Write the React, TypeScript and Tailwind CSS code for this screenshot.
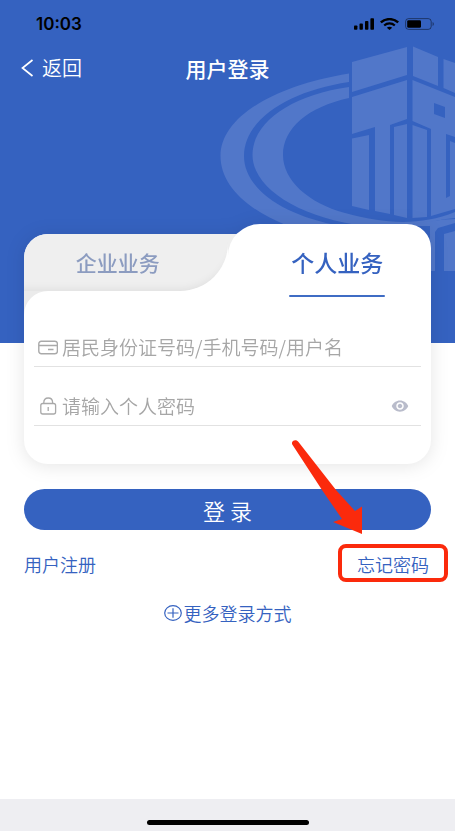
import { useState } from 'react';
import { MdVisibility } from 'react-icons/md';

function SignalIcon() {
  return (
    <svg className="w-5 h-3" viewBox="0 0 20 12" fill="currentColor" aria-hidden="true">
      <rect x="0" y="7.5" width="3.4" height="4.2" rx="0.8" />
      <rect x="5.5" y="5.6" width="3.4" height="6.1" rx="0.8" />
      <rect x="11" y="3" width="3.4" height="8.7" rx="0.8" />
      <rect x="16.4" y="0.3" width="3.6" height="11.4" rx="0.8" />
    </svg>
  );
}

function WifiIcon() {
  return (
    <svg className="w-[19px] h-3" viewBox="0 0 19 12" fill="none" stroke="currentColor" aria-hidden="true">
      <path d="M0.8 4.4C5.6 0 13.4 0 18.2 4.4" strokeWidth="2.4" />
      <path d="M4.2 7.5C7.2 4.7 11.8 4.7 14.8 7.5" strokeWidth="2.2" />
      <path d="M9.5 12 6.8 9.7C8.3 8.4 10.7 8.4 12.2 9.7Z" fill="currentColor" stroke="none" />
    </svg>
  );
}

function BatteryIcon() {
  return (
    <svg className="w-[30px] h-3" viewBox="0 0 30 12" aria-hidden="true">
      <rect x="0.6" y="0.6" width="25.6" height="10.8" rx="3" fill="none" stroke="#000" strokeOpacity="0.45" />
      <rect x="2.2" y="2.2" width="13.8" height="7.6" rx="1.4" fill="#000" />
      <path d="M27.6 4v4c1.6-.7 1.6-3.3 0-4Z" fill="#000" fillOpacity="0.5" />
    </svg>
  );
}

function Emblem() {
  return (
    <svg
      className="absolute right-0 top-10 w-[240px] h-[231px]"
      viewBox="215 40 240 231"
      fill="#5177c9"
      aria-hidden="true"
    >
      {/* rings */}
      <path d="M349 73.500C272 86 220.500 118 220.500 156C220.500 184 245 209 288 226H341C282 216 244 188 244 156C244 120 288 91 349 82Z" />
      <path d="M349 87C292 95 252.500 122 252.500 155C252.500 188 300 218 365 226H420C432 221 443 219 455 218V212C420 226 385 224 345 213C308 203 283 180 283 155C283 128 308 107 349 98Z" />
      <path d="M341 226C390 232 420 220 455 219V223L438 228L435 232V271H430V226Z" />
      <path d="M444 234 455 231V271H444Z" />
      {/* roof */}
      <path d="M352 62 407 47V75L352 92Z" />
      <path d="M413 46.500 438 57V86L413 76Z" />
      <path d="M443.500 59 455 63V93L443.500 88Z" />
      {/* columns */}
      <path d="M352 97 407 80V119L390 125V214L375 211V127L352 134Z" />
      <path d="M352 138.500 369 135V210L352 206Z" />
      <path d="M394 127 407 124V218L394 215Z" />
      <path d="M412.500 125 427 130V217L412.500 218Z" />
      <path
        fillRule="evenodd"
        d="M412.500 80 455 97V137L446 134V198L450 196V141L455 143V209L431 216V129L412.500 121ZM434 103V114L445 118V107Z"
      />
    </svg>
  );
}

function CardIcon() {
  return (
    <svg className="w-5 h-4 shrink-0" viewBox="0 0 20 16" fill="none" stroke="#a9a9a9" strokeWidth="1.4" aria-hidden="true">
      <rect x="0.8" y="1.200" width="18.6" height="12.600" rx="2.500" />
      <path d="M1 5.500H19M10 9.500H15.500" />
    </svg>
  );
}

function LockIcon() {
  return (
    <svg className="w-5 h-[18px] shrink-0" viewBox="0 0 20 18" fill="none" stroke="#a9a9a9" strokeWidth="1.3" aria-hidden="true">
      <rect x="2.800" y="6.500" width="14.800" height="10.500" rx="2" />
      <path d="M5.800 6.500V5.500C5.800 2.600 7.200 1 10.200 1S14.600 2.600 14.600 5.500V6.500M10.200 10V14" />
    </svg>
  );
}

export default function App() {
  const [showPassword, setShowPassword] = useState(false);

  return (
    <div className="min-h-screen flex flex-col bg-white font-['Noto_Sans_CJK_SC',sans-serif] text-[#3562c0]">
      <header className="relative h-[343px] bg-[#3562c0] overflow-hidden">
        <Emblem />
        <div className="relative flex items-center justify-between pt-3 pl-9 pr-5 text-black">
          <span className="font-['Inter',sans-serif] text-[17px] leading-6 font-semibold">10:03</span>
          <div className="flex items-center gap-1.5">
            <SignalIcon />
            <WifiIcon />
            <BatteryIcon />
          </div>
        </div>
        <nav className="relative grid grid-cols-[1fr_auto_1fr] items-center mt-4 px-5 text-white">
          <button type="button" className="flex items-center gap-2 text-xl leading-8 font-[350]">
            <svg className="w-3.5 h-[18px]" viewBox="0 0 14 18" fill="none" stroke="currentColor" strokeWidth="1.7" aria-hidden="true">
              <path d="M12.500 1 2.500 9 12.500 17" />
            </svg>
            返回
          </button>
          <h1 className="text-[21px] leading-8 font-medium">用户登录</h1>
        </nav>
      </header>

      <main className="relative -mt-[119px] px-6">
        <form onSubmit={(e) => e.preventDefault()}>
          <div className="drop-shadow-[0_2px_9px_rgba(0,0,0,0.10)]">
            <div role="tablist" className="grid grid-cols-2 items-end">
              <div className="bg-white rounded-tl-[24px]">
                <button
                  type="button"
                  role="tab"
                  aria-selected="false"
                  className="w-full h-[57px] pr-4 bg-[#efefef] rounded-tl-[24px] rounded-br-[48px] text-[21px] font-medium text-[#8c9cc0] shadow-[inset_0_-9px_10px_-8px_rgba(0,0,0,0.08)]"
                >
                  企业业务
                </button>
              </div>
              <div className="relative before:absolute before:left-0 before:top-2.5 before:w-8 before:h-8 before:bg-[#efefef]">
                <button
                  type="button"
                  role="tab"
                  aria-selected="true"
                  className="relative w-full h-[67px] pt-2.5 pl-4 bg-white rounded-tl-[32px] rounded-tr-[24px] text-[23px] font-medium"
                >
                  个人业务
                </button>
              </div>
            </div>

            <div className="relative before:absolute before:left-0 before:top-0 before:size-6 before:bg-[#ebebeb]">
              <div className="relative bg-white rounded-tl-[24px] rounded-b-[24px] px-2.5 pb-[38px]">
                <div className="flex justify-end pt-1 pr-9">
                  <div className="w-24 h-0.5 bg-[#3f6cc4] rounded-full" />
                </div>
                <label className="flex items-center gap-1 mt-8 h-[38px] px-1 border-b border-[#e2e2e2]">
                  <CardIcon />
                  <input
                    type="text"
                    aria-label="用户名"
                    placeholder="居民身份证号码/手机号码/用户名"
                    className="flex-1 min-w-0 text-[19px] font-[350] outline-none placeholder:text-[#a6a6a6]"
                  />
                </label>
                <div className="flex items-center gap-1 mt-5 h-[39px] px-1 border-b border-[#e2e2e2]">
                  <LockIcon />
                  <input
                    type={showPassword ? 'text' : 'password'}
                    aria-label="密码"
                    placeholder="请输入个人密码"
                    className="flex-1 min-w-0 text-[19px] font-[350] outline-none placeholder:text-[#a6a6a6]"
                  />
                  <button
                    type="button"
                    aria-label="显示密码"
                    onClick={() => setShowPassword(!showPassword)}
                    className="mr-2 text-[#b9bccb]"
                  >
                    <MdVisibility className="size-[18px]" />
                  </button>
                </div>
              </div>
            </div>
          </div>

          <button
            type="submit"
            className="block w-full h-[41px] mt-[25px] rounded-full bg-[#3562c0] text-[22px] leading-10 font-[350] text-white"
          >
            登 录
          </button>
        </form>

        <div className="flex items-center justify-between mt-3.5 text-[18px] leading-7 font-[350]">
          <a href="#register" className="pt-0.5">用户注册</a>
          <div className="relative -mr-[17px]">
            <a href="#forgot" className="block px-[15px] pt-0.5 border-4 border-[#fb2a0c] rounded-lg">
              忘记密码
            </a>
            <svg
              className="absolute right-[84px] bottom-[46px] w-[74px] h-[98px]"
              viewBox="290 438 74 98"
              fill="#fb2a0c"
              aria-hidden="true"
            >
              <path d="M292.300 444.500C290.500 441 296 438.500 298.500 442L336 490L355 511L362 506.500V534L333 522L342 519L322 490Z" />
            </svg>
          </div>
        </div>

        <div className="flex justify-center mt-4">
          <a href="#more" className="flex items-center gap-0.5 text-[18px] leading-[30px] font-[350]">
            <svg className="w-[18px] h-4" viewBox="0 0 18 16" fill="none" stroke="currentColor" strokeWidth="1.2" aria-hidden="true">
              <ellipse cx="9" cy="8" rx="8.300" ry="7.300" />
              <path d="M3.500 8H14.500M9 3.300V12.700" />
            </svg>
            更多登录方式
          </a>
        </div>
      </main>

      <footer className="mt-auto h-8 pt-[21px] bg-[#eeeef2]">
        <div className="w-[162px] h-[5px] mx-auto rounded-full bg-black" />
      </footer>
    </div>
  );
}
